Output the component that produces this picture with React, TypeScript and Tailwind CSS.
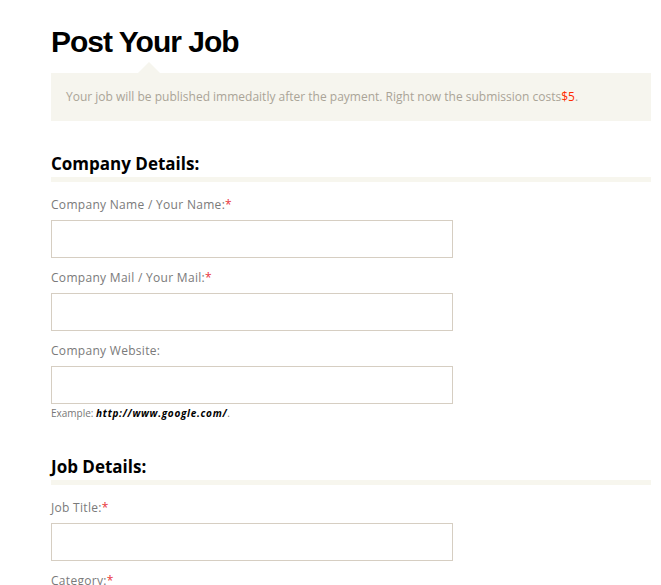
const fields1 = [
  { label: "Company Name / Your Name:", required: true },
  { label: "Company Mail / Your Mail:", required: true },
  { label: "Company Website:", required: false },
];

const Field = ({ label, required }: { label: string; required?: boolean }) => (
  <div className="mb-[11px]">
    <label className="block text-[12px] leading-[18px] tracking-[0.3px] text-[#7a7a7a] mb-[6px]">
      {label}
      {required && <span className="text-[#e8333a]">*</span>}
    </label>
    <input type="text" className="block w-[402px] h-[38px] border border-[#d6cec2] bg-white outline-none" />
  </div>
);

const SectionTitle = ({ children }: { children: string }) => (
  <h2 className="text-[17px] leading-[22px] font-bold text-black pb-[2px] border-b-[5px] border-[#f7f6ee] mb-[14px]">
    {children}
  </h2>
);

export default function App() {
  return (
    <div className="min-h-[585px] bg-white" style={{ fontFamily: '"Open Sans", sans-serif' }}>
      <div className="ml-[51px] w-[600px] pt-[24px]">
        <h1 className="text-[30px] leading-[36px] font-bold tracking-[-1px] text-black" style={{ fontFamily: '"Liberation Sans", Arial, sans-serif' }}>
          Post Your Job
        </h1>

        <div className="relative mt-[13px] h-[48px] bg-[#f6f5ee] pl-[15px] text-[12px] leading-[48px] text-[#aaa497]">
          <span className="absolute left-[87px] top-[-11px] w-0 h-0 border-l-[11px] border-r-[11px] border-b-[11px] border-l-transparent border-r-transparent border-b-[#f6f5ee]" />
          Your job will be published immedaitly after the payment. Right now the submission costs
          <span className="text-[#ff2a00]">$5</span>.
        </div>

        <div className="mt-[32px]">
          <SectionTitle>Company Details:</SectionTitle>
          {fields1.map(f => (
            <Field key={f.label} label={f.label} required={f.required} />
          ))}
          <p className="-mt-[9px] text-[10px] leading-[14px] text-[#777]">
            Example: <b className="italic text-black tracking-[0.7px]">http://www.google.com/</b>.
          </p>
        </div>

        <div className="mt-[36px]">
          <SectionTitle>Job Details:</SectionTitle>
          <Field label="Job Title:" required />
          <Field label="Category:" required />
        </div>
      </div>
    </div>
  );
}
